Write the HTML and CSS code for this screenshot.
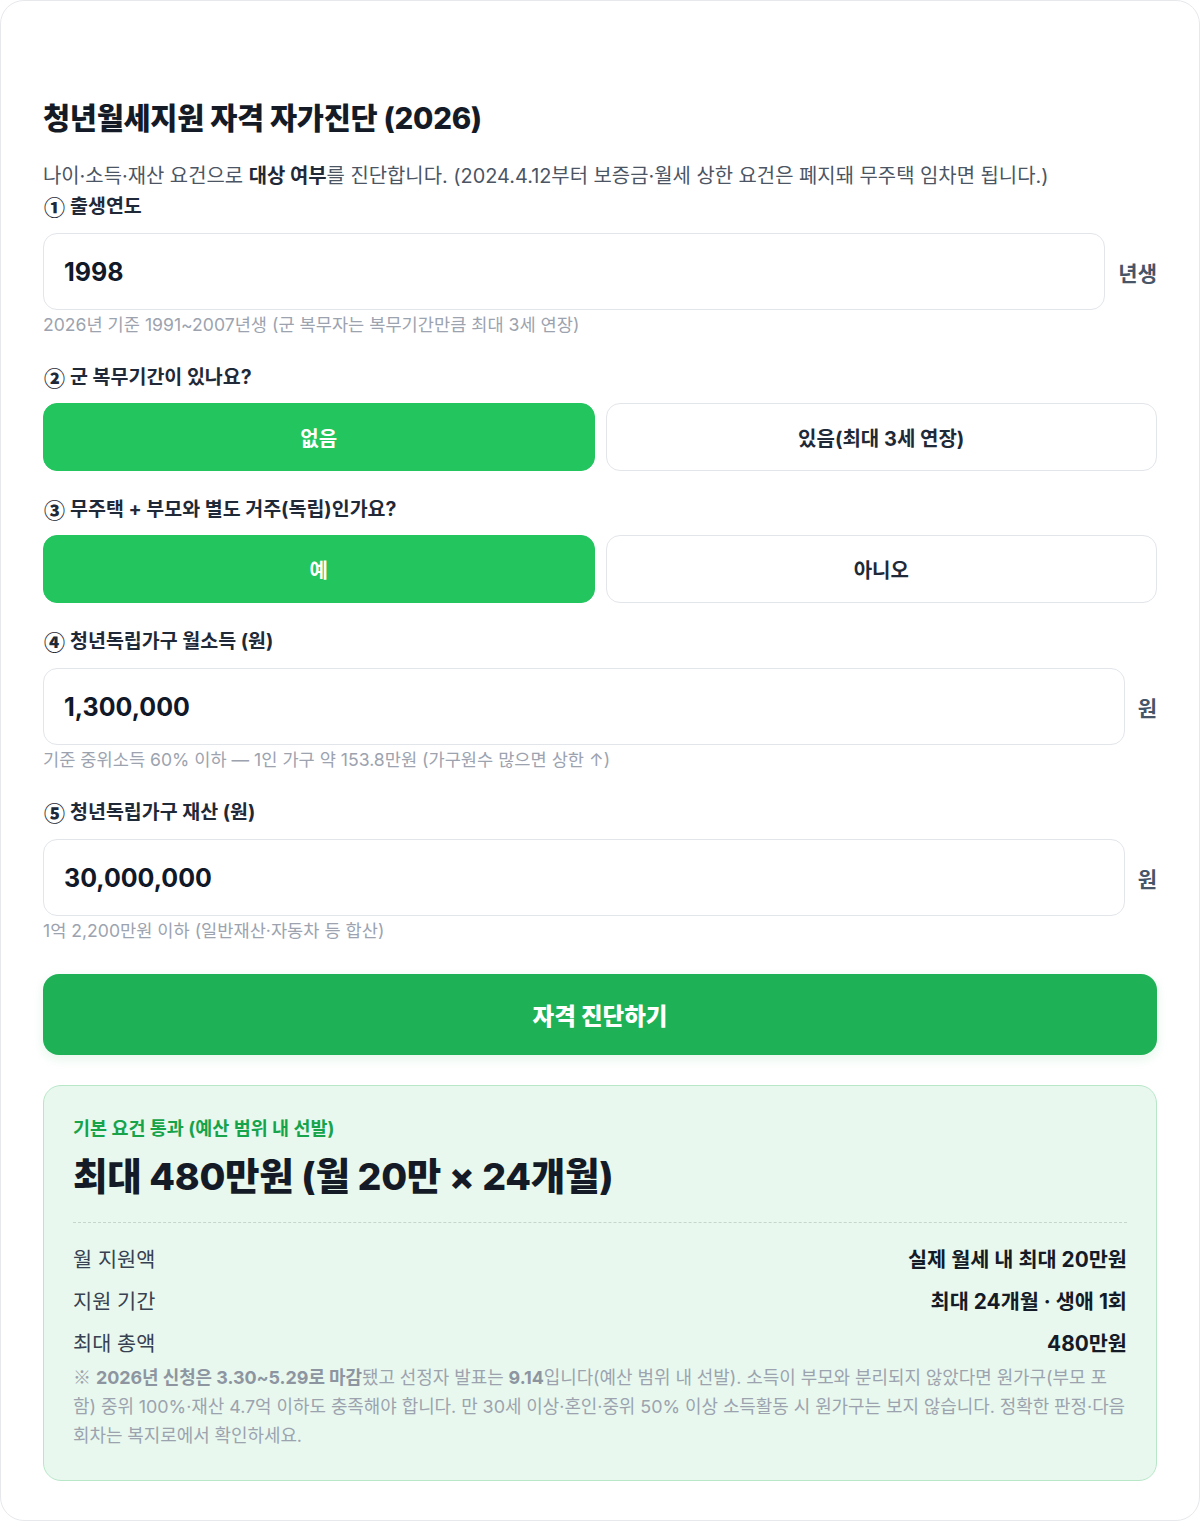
FILE: index.html
```html
<!DOCTYPE html>
<html lang="ko">
<head>
  <meta charset="UTF-8">
  <meta name="viewport" content="width=device-width, initial-scale=1.0">
  <title>청년월세지원 자격 자가진단 (2026)</title>
  <link rel="stylesheet" href="styles.css">
</head>
<body>
  <div class="card">
    <h1>청년월세지원 자격 자가진단 (2026)</h1>
    <p class="desc">나이·소득·재산 요건으로 <b>대상 여부</b>를 진단합니다. (2024.4.12부터 보증금·월세 상한 요건은 폐지돼 무주택 임차면 됩니다.)</p>

    <div class="field">
      <label class="label"><span class="num">①</span>출생연도</label>
      <div class="input-row">
        <div class="input">1998</div>
        <span class="suffix">년생</span>
      </div>
      <p class="hint">2026년 기준 1991~2007년생 (군 복무자는 복무기간만큼 최대 3세 연장)</p>
    </div>

    <div class="field choice-field">
      <label class="label"><span class="num">②</span>군 복무기간이 있나요?</label>
      <div class="choices">
        <button class="choice active">없음</button>
        <button class="choice">있음(최대 3세 연장)</button>
      </div>
    </div>

    <div class="field choice-field">
      <label class="label"><span class="num">③</span>무주택 + 부모와 별도 거주(독립)인가요?</label>
      <div class="choices">
        <button class="choice active">예</button>
        <button class="choice">아니오</button>
      </div>
    </div>

    <div class="field">
      <label class="label"><span class="num">④</span>청년독립가구 월소득 (원)</label>
      <div class="input-row">
        <div class="input">1,300,000</div>
        <span class="suffix">원</span>
      </div>
      <p class="hint">기준 중위소득 60% 이하 — 1인 가구 약 153.8만원 (가구원수 많으면 상한 ↑)</p>
    </div>

    <div class="field">
      <label class="label"><span class="num">⑤</span>청년독립가구 재산 (원)</label>
      <div class="input-row">
        <div class="input">30,000,000</div>
        <span class="suffix">원</span>
      </div>
      <p class="hint">1억 2,200만원 이하 (일반재산·자동차 등 합산)</p>
    </div>

    <button class="submit">자격 진단하기</button>

    <div class="result">
      <div class="result-tag">기본 요건 통과 (예산 범위 내 선발)</div>
      <div class="result-title">최대 480만원 (월 20만 × 24개월)</div>
      <div class="result-rows">
        <div class="row"><span>월 지원액</span><b>실제 월세 내 최대 20만원</b></div>
        <div class="row"><span>지원 기간</span><b>최대 24개월 · 생애 1회</b></div>
        <div class="row"><span>최대 총액</span><b>480만원</b></div>
      </div>
      <p class="note"><span class="mark">※</span> <b>2026년 신청은 3.30~5.29로 마감</b>됐고 선정자 발표는 <b>9.14</b>입니다(예산 범위 내 선발). 소득이 부모와 분리되지 않았다면 원가구(부모 포함) 중위 100%·재산 4.7억 이하도 충족해야 합니다. 만 30세 이상·혼인·중위 50% 이상 소득활동 시 원가구는 보지 않습니다. 정확한 판정·다음 회차는 복지로에서 확인하세요.</p>
    </div>
  </div>
</body>
</html>
```

FILE: styles.css
```css
body {
  margin: 0;
  padding: 0;
  background: #ffffff;
  font-family: Inter, "Noto Sans CJK KR", sans-serif;
  color: #1f2937;
}
.card {
  border: 1px solid #e6e8ec;
  border-radius: 24px;
  padding: 96px 42px 39px;
  background: #fff;
}
h1 {
  margin: 0;
  font-size: 29.5px;
  line-height: 42px;
  font-weight: 800;
  color: #151b26;
  letter-spacing: -0.3px;
}
.desc {
  margin: 22px 0 0;
  font-size: 19.9px;
  line-height: 30px;
  color: #4b5563;
}
.desc b {
  color: #1f2937;
}
.field {
  margin-bottom: 26px;
}
.choice-field {
  margin-bottom: 24px;
}
.label {
  display: flex;
  align-items: center;
  font-size: 19.5px;
  line-height: 28px;
  font-weight: 700;
  color: #1f2937;
  margin-bottom: 13px;
}
.choice-field .label {
  margin-bottom: 12px;
}
.num {
  font-family: "Noto Sans CJK KR", sans-serif;
  font-size: 21px;
  line-height: 28px;
  font-weight: 900;
  margin-left: 1px;
  margin-right: 5px;
}
.desc + .field .label {
  margin-top: 1px;
}
.input-row {
  display: flex;
  align-items: center;
  gap: 13px;
}
.input {
  flex: 1;
  height: 75px;
  border: 1px solid #e2e5ea;
  border-radius: 14px;
  padding: 0 20px;
  display: flex;
  align-items: center;
  font-size: 25px;
  font-weight: 700;
  color: #111827;
}
.suffix {
  font-size: 21px;
  font-weight: 700;
  color: #475569;
}
.hint {
  margin: 3px 0 0;
  font-size: 17.6px;
  line-height: 24px;
  color: #9ca3af;
}
.choices {
  display: flex;
  gap: 11px;
}
.choice {
  flex: 1;
  height: 68px;
  border: 1px solid #e2e5ea;
  border-radius: 14px;
  background: #fff;
  font-family: inherit;
  font-size: 20px;
  font-weight: 700;
  color: #1f2937;
}
.choice.active {
  background: #22c55e;
  border-color: #22c55e;
  color: #fff;
}
.submit {
  display: block;
  width: 100%;
  height: 81px;
  margin-top: 31px;
  border: none;
  border-radius: 16px;
  background: #1fb155;
  color: #fff;
  font-family: inherit;
  font-size: 23.5px;
  font-weight: 800;
  box-shadow: 0 4px 12px rgba(31, 177, 85, 0.12);
}
.result {
  margin-top: 30px;
  background: #e8f8ee;
  border: 1px solid #b8e7c8;
  border-radius: 18px;
  padding: 30px 29px 30px;
}
.result-tag {
  font-size: 18.5px;
  line-height: 24px;
  font-weight: 700;
  color: #16a34a;
}
.result-title {
  margin-top: 13px;
  font-size: 37.5px;
  line-height: 48px;
  font-weight: 800;
  color: #151b26;
  letter-spacing: -0.3px;
}
.result-rows {
  margin-top: 21px;
  border-top: 1.5px dashed #c8d5cc;
  padding-top: 16px;
}
.row {
  display: flex;
  justify-content: space-between;
  padding: 7px 0;
  font-size: 20.8px;
  line-height: 28px;
  color: #374151;
}
.row b {
  color: #151b26;
  font-weight: 700;
}
.note {
  margin: -3px 0 0;
  font-size: 17.95px;
  line-height: 29px;
  letter-spacing: -0.05px;
  color: #9ca3af;
}
.note b {
  color: #8d95a1;
}
.mark {
  font-family: "Noto Sans CJK KR", sans-serif;
}
```
